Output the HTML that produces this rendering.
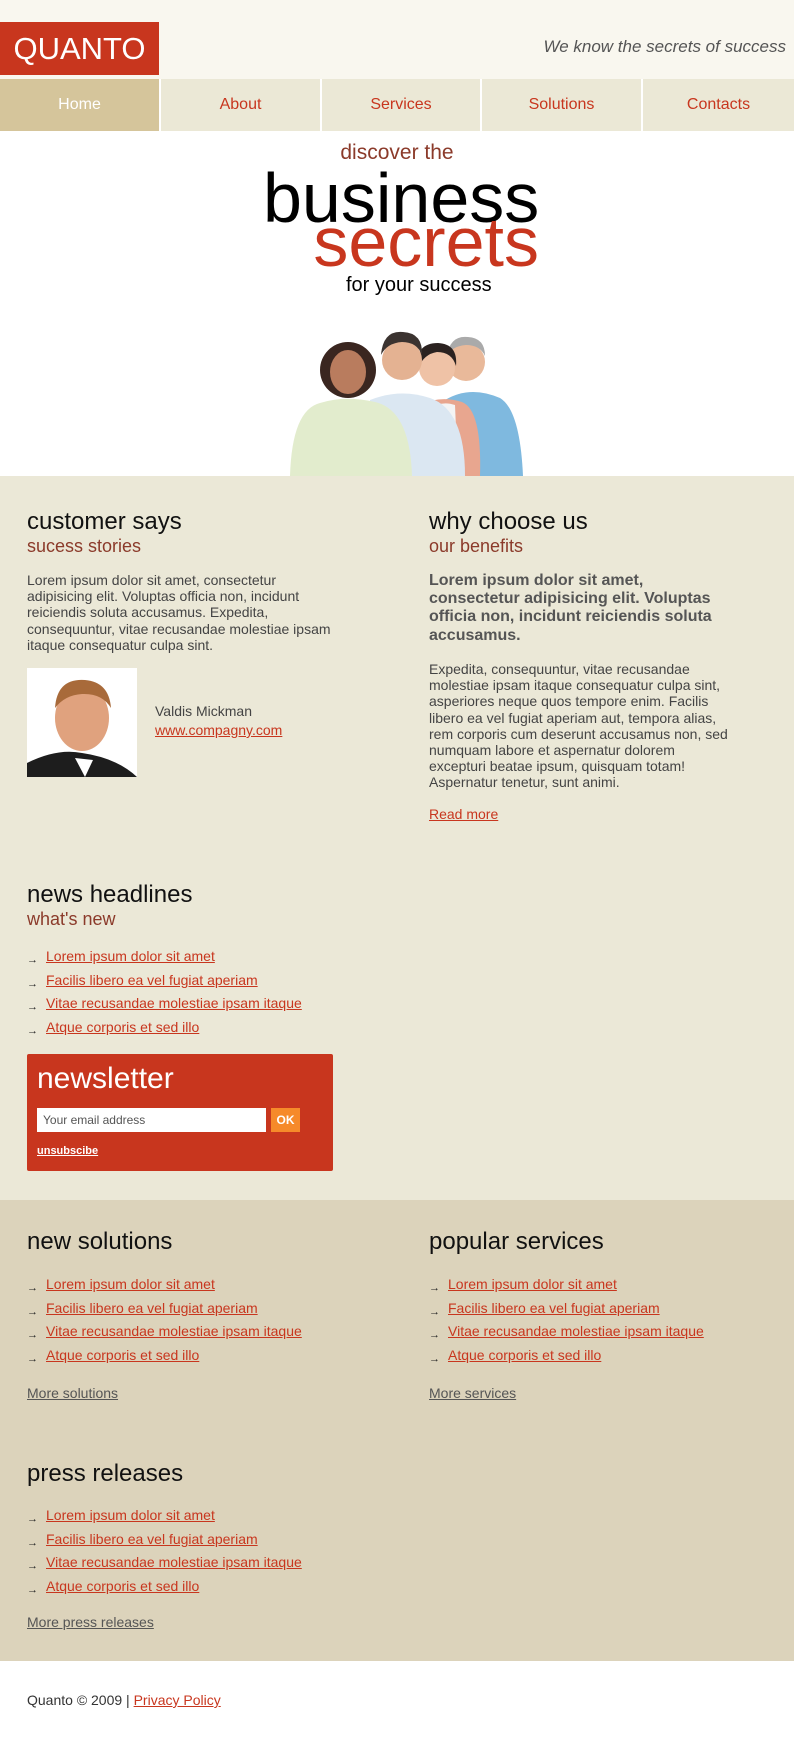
<!DOCTYPE html>
<html><head><meta charset="utf-8"><style>
*{margin:0;padding:0;box-sizing:border-box}
body{width:794px;height:1738px;position:relative;background:#fff;font-family:"Liberation Sans",Arial,sans-serif;overflow:hidden}
.a{position:absolute;white-space:nowrap}
a{color:#c8361e}
.h{font-size:24px;color:#111;line-height:28px}
.s{font-size:18px;color:#8b3a2a;line-height:20px}
.p{font-size:14px;color:#444;line-height:16.2px;white-space:normal}
ul{list-style:none}
li{font-size:14px;height:23.5px;line-height:23.5px}
li:before{content:"→";color:#222;font-size:11px;margin-right:8px;position:relative;top:2px}
.more{color:#555;font-size:14px}
</style></head><body>
<div class="a" style="left:0;top:0;width:794px;height:79px;background:#f9f7ef"></div>
<div class="a" style="left:0;top:22px;width:159px;height:53px;background:#c8361e;color:#fff;font-size:31px;line-height:53px;text-align:center">QUANTO</div>
<div class="a" style="right:8px;top:37px;font-size:17px;font-style:italic;color:#555">We know the secrets of success</div>
<div class="a" style="left:0;top:79px;width:794px;height:52px;background:#fff"></div>
<div class="a" style="left:0;top:79px;width:159px;height:52px;background:#d5c59b;color:#fff;font-size:16px;line-height:52px;text-align:center">Home</div>
<div class="a" style="left:161px;top:79px;width:159px;height:52px;background:#ebe8d6;color:#c8361e;font-size:16px;line-height:52px;text-align:center">About</div>
<div class="a" style="left:322px;top:79px;width:158px;height:52px;background:#ebe8d6;color:#c8361e;font-size:16px;line-height:52px;text-align:center">Services</div>
<div class="a" style="left:482px;top:79px;width:159px;height:52px;background:#ebe8d6;color:#c8361e;font-size:16px;line-height:52px;text-align:center">Solutions</div>
<div class="a" style="left:643px;top:79px;width:151px;height:52px;background:#ebe8d6;color:#c8361e;font-size:16px;line-height:52px;text-align:center">Contacts</div>

<div class="a" style="left:0;width:794px;top:141px;text-align:center;font-size:21px;color:#8b3a2a">discover the</div>
<div class="a" style="left:263px;top:163px;font-size:70px;line-height:70px;color:#000">business</div>
<div class="a" style="right:255px;top:207px;font-size:70px;line-height:70px;color:#c8361e">secrets</div>
<div class="a" style="left:346px;top:274px;font-size:20px;color:#000">for your success</div>

<svg class="a" style="left:285px;top:325px" width="245" height="152" viewBox="285 325 245 152">
<path d="M445 400 Q470 385 500 398 Q520 410 523 476 L445 476Z" fill="#7fb9df"/>
<circle cx="466" cy="362" r="19" fill="#e9b99a"/><path d="M447 356 Q450 335 468 337 Q485 338 485 356 Q480 345 466 345 Q452 346 447 356Z" fill="#aaa"/>
<path d="M420 405 Q440 395 462 402 Q482 410 480 476 L420 476Z" fill="#e8a68f"/>
<path d="M430 410 Q440 400 455 405 L458 476 L430 476Z" fill="#f4f4f4"/>
<circle cx="437" cy="368" r="18" fill="#efc2a6"/><path d="M418 368 Q415 343 438 343 Q458 344 456 366 Q452 352 437 352 Q424 354 418 368Z" fill="#2b2220"/>
<path d="M370 400 Q400 388 430 398 Q465 410 465 476 L370 476Z" fill="#dbe7f2"/>
<circle cx="402" cy="360" r="20" fill="#e4b292"/><path d="M381 355 Q383 330 403 332 Q423 333 422 355 Q417 342 402 342 Q387 343 381 355Z" fill="#3b3330"/>
<path d="M290 476 Q292 410 320 403 Q345 395 375 402 Q410 410 412 476Z" fill="#e2eccd"/>
<circle cx="348" cy="370" r="28" fill="#3a2620"/>
<ellipse cx="348" cy="372" rx="18" ry="22" fill="#b97c5e"/>
</svg>

<div class="a" style="left:0;top:476px;width:794px;height:724px;background:#ebe8d7"></div>
<div class="a h" style="left:27px;top:508px">customer says</div>
<div class="a s" style="left:27px;top:536px">sucess stories</div>
<div class="a p" style="left:27px;top:572px;width:310px">Lorem ipsum dolor sit amet, consectetur adipisicing elit. Voluptas officia non, incidunt reiciendis soluta accusamus. Expedita, consequuntur, vitae recusandae molestiae ipsam itaque consequatur culpa sint.</div>
<svg class="a" style="left:27px;top:668px" width="110" height="109">
<rect width="110" height="109" fill="#fff"/>
<path d="M0 109 L0 95 Q30 80 55 85 Q90 90 110 109Z" fill="#1d1d1d"/>
<path d="M48 90 L58 109 L66 92Z" fill="#fff"/>
<ellipse cx="55" cy="50" rx="27" ry="33" fill="#e0a27e"/>
<path d="M28 40 Q30 10 58 12 Q82 14 84 40 Q75 25 55 26 Q38 27 28 40Z" fill="#a86a3a"/>
</svg>
<div class="a" style="left:155px;top:703px;font-size:14px;color:#444">Valdis Mickman</div>
<div class="a" style="left:155px;top:722px;font-size:14px"><a href="#">www.compagny.com</a></div>

<div class="a h" style="left:429px;top:508px">why choose us</div>
<div class="a s" style="left:429px;top:536px">our benefits</div>
<div class="a p" style="left:429px;top:572px;width:292px;font-size:16px;line-height:18.2px;font-weight:bold;color:#555">Lorem ipsum dolor sit amet, consectetur adipisicing elit. Voluptas officia non, incidunt reiciendis soluta accusamus.</div>
<div class="a p" style="left:429px;top:661px;width:302px">Expedita, consequuntur, vitae recusandae molestiae ipsam itaque consequatur culpa sint, asperiores neque quos tempore enim. Facilis libero ea vel fugiat aperiam aut, tempora alias, rem corporis cum deserunt accusamus non, sed numquam labore et aspernatur dolorem excepturi beatae ipsum, quisquam totam! Aspernatur tenetur, sunt animi.</div>
<div class="a" style="left:429px;top:806px;font-size:14px"><a href="#">Read more</a></div>

<div class="a h" style="left:27px;top:881px">news headlines</div>
<div class="a s" style="left:27px;top:909px">what's new</div>
<ul class="a" style="left:27px;top:945px">
<li><a href="#">Lorem ipsum dolor sit amet</a></li><li><a href="#">Facilis libero ea vel fugiat aperiam</a></li><li><a href="#">Vitae recusandae molestiae ipsam itaque</a></li><li><a href="#">Atque corporis et sed illo</a></li></ul>
<div class="a" style="left:27px;top:1054px;width:306px;height:117px;background:#c8361e;border-radius:2px"></div>
<div class="a" style="left:37px;top:1062px;font-size:30px;color:#fff">newsletter</div>
<div class="a" style="left:37px;top:1108px;width:229px;height:24px;background:#fff;font-size:12px;color:#555;line-height:24px;padding-left:6px">Your email address</div>
<div class="a" style="left:271px;top:1108px;width:29px;height:24px;background:#f68a2a;color:#fff;font-size:12px;font-weight:bold;line-height:24px;text-align:center">OK</div>
<div class="a" style="left:37px;top:1145px;font-size:11px;font-weight:bold;color:#fff;text-decoration:underline">unsubscibe</div>

<div class="a" style="left:0;top:1200px;width:794px;height:461px;background:#dcd3bb"></div>
<div class="a h" style="left:27px;top:1228px">new solutions</div>
<ul class="a" style="left:27px;top:1273px">
<li><a href="#">Lorem ipsum dolor sit amet</a></li><li><a href="#">Facilis libero ea vel fugiat aperiam</a></li><li><a href="#">Vitae recusandae molestiae ipsam itaque</a></li><li><a href="#">Atque corporis et sed illo</a></li></ul>
<div class="a" style="left:27px;top:1385px"><a class="more" href="#">More solutions</a></div>
<div class="a h" style="left:429px;top:1228px">popular services</div>
<ul class="a" style="left:429px;top:1273px">
<li><a href="#">Lorem ipsum dolor sit amet</a></li><li><a href="#">Facilis libero ea vel fugiat aperiam</a></li><li><a href="#">Vitae recusandae molestiae ipsam itaque</a></li><li><a href="#">Atque corporis et sed illo</a></li></ul>
<div class="a" style="left:429px;top:1385px"><a class="more" href="#">More services</a></div>
<div class="a h" style="left:27px;top:1460px">press releases</div>
<ul class="a" style="left:27px;top:1504px">
<li><a href="#">Lorem ipsum dolor sit amet</a></li><li><a href="#">Facilis libero ea vel fugiat aperiam</a></li><li><a href="#">Vitae recusandae molestiae ipsam itaque</a></li><li><a href="#">Atque corporis et sed illo</a></li></ul>
<div class="a" style="left:27px;top:1614px"><a class="more" href="#">More press releases</a></div>

<div class="a" style="left:27px;top:1692px;font-size:14px;color:#333">Quanto © 2009 | <a href="#">Privacy Policy</a></div>
</body></html>
